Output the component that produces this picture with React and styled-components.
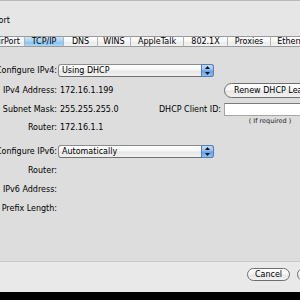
import React from 'react';
import styled, { createGlobalStyle, css } from 'styled-components';

const GlobalStyle = createGlobalStyle`
  html, body {
    margin: 0;
    padding: 0;
    background: #000;
    overflow: hidden;
  }
  body {
    font-family: "DejaVu Sans", "Lucida Grande", sans-serif;
    font-size: 8px;
    color: #000;
  }
`;

const aquaGloss = css`
  background: linear-gradient(#ffffff, #f6f6f6 48%, #e6e6e6 52%, #f1f1f1);
`;

// the sheet is wider than the viewport, its left edge is cut off
const Sheet = styled.div`
  margin-left: -40px;
  width: 396px;
  display: flex;
  flex-direction: column;
  background: #e6e6e6;
  border-top: 1px solid #b9b9b9;
`;

const Header = styled.div`
  height: 35px;
  box-sizing: border-box;
  padding: 3px 0 0 23px;
  display: flex;
  align-items: center;
  white-space: nowrap;
`;

const TabBar = styled.div`
  display: flex;
  height: 11px;
  margin-left: 28px;
`;

const Tab = styled.div`
  width: ${p => p.$w}px;
  flex: none;
  box-sizing: border-box;
  display: flex;
  align-items: center;
  justify-content: center;
  white-space: nowrap;
  border-top: 1px solid #9a9a9a;
  border-bottom: 1px solid #9a9a9a;
  border-left: 1px solid #b4b4b4;
  background: ${p =>
    p.$active
      ? 'linear-gradient(#cfe6fb, #a3d0f6 50%, #86c0f0 52%, #aad6f8)'
      : 'linear-gradient(#ffffff, #f5f5f5 50%, #ebebeb 52%, #f2f2f2)'};
`;

const Panel = styled.div`
  height: 215px;
  box-sizing: border-box;
  padding-top: 17px;
  background: #dddddd;
  border-bottom: 1px solid #c9c9c9;
`;

const Form = styled.div`
  display: grid;
  grid-template-columns: 97px 90px 68px 92px;
  grid-template-rows: ${p => p.$rows};
  column-gap: 3px;
  row-gap: ${p => p.$gap}px;
  align-items: center;
  margin-top: ${p => p.$top || 0}px;
`;

const Label = styled.div`
  grid-column: 1;
  justify-self: end;
  white-space: nowrap;
`;

const Value = styled.div`
  grid-column: 2;
  white-space: nowrap;
`;

const SideLabel = styled.div`
  grid-column: 3;
  justify-self: end;
  white-space: nowrap;
`;

const Popup = styled.div`
  grid-column: 2 / span 2;
  justify-self: start;
  margin-left: -2px;
  width: 156px;
  height: 13px;
  box-sizing: border-box;
  display: flex;
  align-items: center;
  padding-left: 3px;
  border: 1px solid #8c8c8c;
  border-bottom-color: #6f6f6f;
  border-radius: 3px;
  ${aquaGloss};
  white-space: nowrap;
`;

const Stepper = styled.div`
  margin: -1px -1px -1px auto;
  width: 13px;
  height: 13px;
  box-sizing: border-box;
  display: flex;
  align-items: center;
  justify-content: center;
  border: 1px solid #5a7bb5;
  border-radius: 0 3px 3px 0;
  background: linear-gradient(#c4defa, #8dbdf2 48%, #5f9ee9 52%, #8cc4f5);
`;

const PillButton = styled.div`
  grid-column: 4;
  justify-self: start;
  height: 15px;
  box-sizing: border-box;
  padding: 0 9px;
  display: flex;
  align-items: center;
  white-space: nowrap;
  border: 1px solid #6e6e6e;
  border-radius: 8px;
  ${aquaGloss};
`;

const TextField = styled.div`
  grid-column: 4;
  justify-self: start;
  width: 110px;
  height: 13px;
  box-sizing: border-box;
  background: #fff;
  border: 1px solid #a6a6a6;
  border-top-color: #7c7c7c;
`;

const Note = styled.div`
  grid-column: 4;
  align-self: start;
  margin-top: -4px;
  text-align: center;
  font-size: 6.5px;
  color: #222;
  white-space: nowrap;
`;

const Footer = styled.div`
  height: 30px;
  box-sizing: border-box;
  padding: 6px 16px 0 0;
  display: flex;
  justify-content: flex-end;
  align-items: flex-start;
  gap: 7px;
  background: #e9e9e9;
`;

const FooterButton = styled.div`
  width: 43px;
  height: 13px;
  box-sizing: border-box;
  display: flex;
  align-items: center;
  justify-content: center;
  border: 1px solid #6e6e6e;
  border-radius: 7px;
  ${aquaGloss};
`;

const tabs = [
  { name: 'AirPort', w: 36 },
  { name: 'TCP/IP', w: 39, active: true },
  { name: 'DNS', w: 34 },
  { name: 'WINS', w: 33 },
  { name: 'AppleTalk', w: 53 },
  { name: '802.1X', w: 44 },
  { name: 'Proxies', w: 43 },
  { name: 'Ethernet', w: 48 },
];

const Arrows = () => (
  <svg width="5" height="9" viewBox="0 0 5 9">
    <polygon points="2.5,0 0,3 5,3" fill="#111" />
    <polygon points="0,6 5,6 2.5,9" fill="#111" />
  </svg>
);

const PopupMenu = ({ children }) => (
  <Popup>
    {children}
    <Stepper>
      <Arrows />
    </Stepper>
  </Popup>
);

export default function App() {
  return (
    <>
      <GlobalStyle />
      <Sheet>
        <Header>AirPort</Header>
        <TabBar>
          {tabs.map(t => (
            <Tab key={t.name} $w={t.w} $active={t.active}>
              {t.name}
            </Tab>
          ))}
        </TabBar>
        <Panel>
          <Form $rows="13px 16px 13px 12px" $gap={5}>
            <Label>Configure IPv4:</Label>
            <PopupMenu>Using DHCP</PopupMenu>

            <Label>IPv4 Address:</Label>
            <Value>172.16.1.199</Value>
            <PillButton>Renew DHCP Lease</PillButton>

            <Label>Subnet Mask:</Label>
            <Value>255.255.255.0</Value>
            <SideLabel>DHCP Client ID:</SideLabel>
            <TextField />

            <Label>Router:</Label>
            <Value>172.16.1.1</Value>
            <Note>( If required )</Note>
          </Form>
          <Form $rows="13px 13px 13px 13px" $gap={6} $top={12}>
            <Label>Configure IPv6:</Label>
            <PopupMenu>Automatically</PopupMenu>
            <Label>Router:</Label>
            <Label>IPv6 Address:</Label>
            <Label>Prefix Length:</Label>
          </Form>
        </Panel>
        <Footer>
          <FooterButton>Cancel</FooterButton>
          <FooterButton>OK</FooterButton>
        </Footer>
      </Sheet>
    </>
  );
}
